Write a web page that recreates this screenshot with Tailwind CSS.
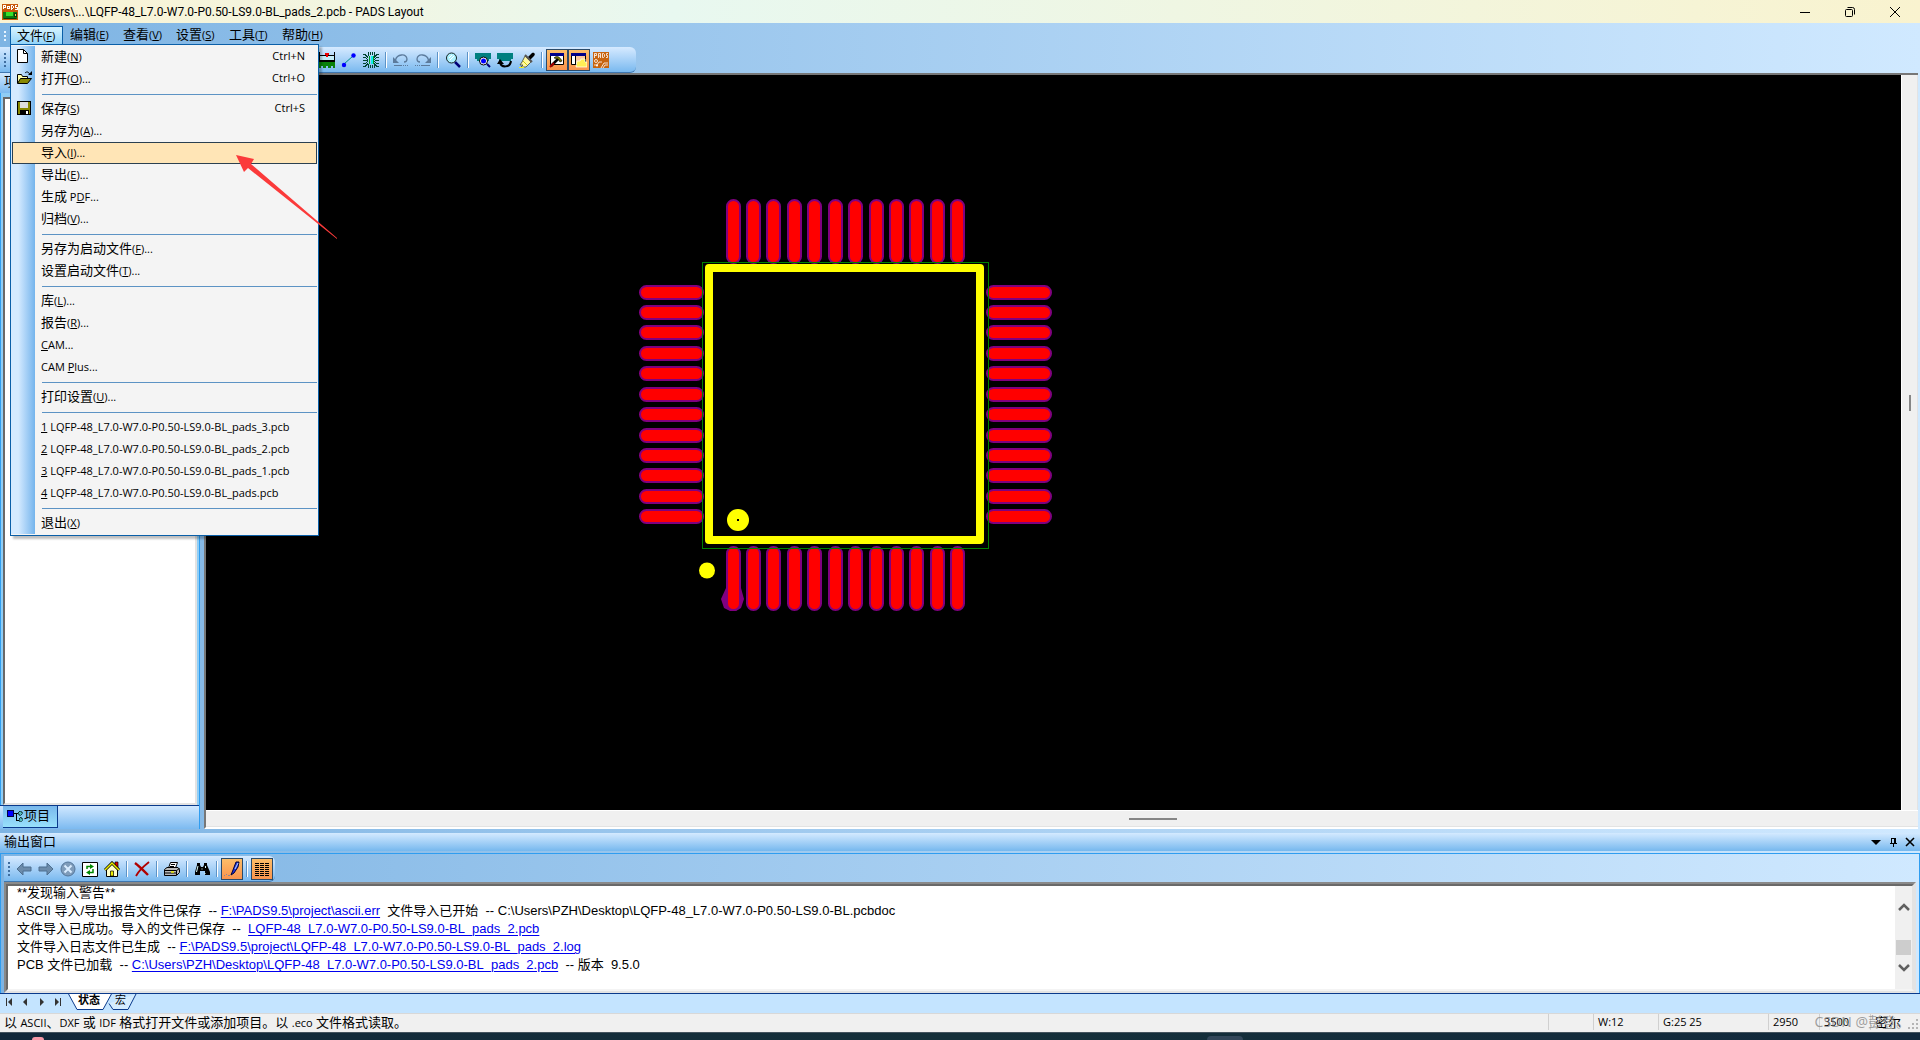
<!DOCTYPE html>
<html lang="zh-CN">

<head>
  <meta charset="UTF-8">
  <meta name="viewport" content="width=device-width, initial-scale=1.0">
  <title>PADS Layout</title>
  <script src="https://cdn.jsdelivr.net/npm/@tailwindcss/browser@4"></script>
</head>

<body class="relative h-screen flex flex-col overflow-hidden bg-gradient-to-r from-[#7eb4e3] to-[#d0e9ff] font-['Open_Sans','Noto_Sans_CJK_SC',sans-serif] text-[11px] leading-4 text-black">

  <!-- Title bar -->
  <header class="h-[23px] shrink-0 flex items-center justify-between pl-0.5 pr-5 bg-gradient-to-r from-[#fcf3d2] via-[#e8f8f0] via-35% to-[#f9f3cf]">
    <div class="flex items-center gap-1.5">
      <svg class="w-4 h-4" viewBox="0 0 16 16" shape-rendering="crispEdges">
        <rect width="16" height="16" fill="#c8590b" />
        <path d="M1 5V1h2v2H1M5 5V2h2v3M5 4h2M9 1v4h1l1-1V2l-1-1zM15 1h-2v2h2v2h-2" fill="none" stroke="#fff" />
        <rect x="1" y="8" width="14" height="7" fill="#0d7a12" />
        <rect x="4" y="8" width="7" height="4" fill="#35e02a" />
        <path d="M2 14h12M12 9h2v3h-2z" stroke="#0a3d08" fill="#ffd44a" />
      </svg>
      <h1 class="font-['Roboto',sans-serif] text-xs">C:\Users\...\LQFP-48_L7.0-W7.0-P0.50-LS9.0-BL_pads_2.pcb - PADS Layout</h1>
    </div>
    <div class="flex items-center gap-[35px]">
      <button aria-label="最小化"><svg class="w-2.5 h-2.5" viewBox="0 0 10 10"><path d="M0 5.500h10" stroke="#000" /></svg></button>
      <button aria-label="还原"><svg class="w-2.5 h-2.5" viewBox="0 0 10 10" fill="none" stroke="#000"><rect x=".5" y="2.500" width="7" height="7" rx="1" /><path d="M2.500 .5h5a2 2 0 0 1 2 2v5" /></svg></button>
      <button aria-label="关闭"><svg class="w-2.5 h-2.5" viewBox="0 0 10 10"><path d="M0 0l10 10M10 0L0 10" stroke="#000" /></svg></button>
    </div>
  </header>

  <!-- Menu bar -->
  <nav class="h-6 shrink-0 flex items-center pt-px whitespace-nowrap">
    <div class="w-2.5 flex flex-col gap-0.5 items-center"><i class="w-0.5 h-0.5 bg-[#e8f4ff]"></i><i class="w-0.5 h-0.5 bg-[#e8f4ff]"></i><i class="w-0.5 h-0.5 bg-[#e8f4ff]"></i></div>
    <button class="w-[53px] h-5 px-1.5 pb-0.5 text-left border border-[#0a5fa8] bg-gradient-to-b from-[#d8f4ff] to-[#8ed2f8]"><span class="text-[13px]">文件</span>(<u>F</u>)</button>
    <button class="w-[53px] h-5 px-[7px] pb-0.5 text-left"><span class="text-[13px]">编辑</span>(<u>E</u>)</button>
    <button class="w-[53px] h-5 px-[7px] pb-0.5 text-left"><span class="text-[13px]">查看</span>(<u>V</u>)</button>
    <button class="w-[53px] h-5 px-[7px] pb-0.5 text-left"><span class="text-[13px]">设置</span>(<u>S</u>)</button>
    <button class="w-[53px] h-5 px-[7px] pb-0.5 text-left"><span class="text-[13px]">工具</span>(<u>T</u>)</button>
    <button class="w-[53px] h-5 px-[7px] pb-0.5 text-left"><span class="text-[13px]">帮助</span>(<u>H</u>)</button>
  </nav>

  <!-- Main toolbar -->
  <div class="h-[26px] shrink-0 flex">
    <div class="flex items-center pr-6 rounded-r-md border-b border-[#3f77b0] bg-gradient-to-b from-[#d6eaff] to-[#79b9ef]">
      <div class="w-2.5 flex flex-col gap-0.5 items-center"><i class="w-0.5 h-0.5 bg-[#3f6ea0]"></i><i class="w-0.5 h-0.5 bg-[#3f6ea0]"></i><i class="w-0.5 h-0.5 bg-[#3f6ea0]"></i><i class="w-0.5 h-0.5 bg-[#3f6ea0]"></i></div>
      <div class="w-[306px]"></div>
      <button class="w-[22px] h-[22px] grid place-items-center" aria-label="板层">
        <svg class="w-4 h-4" viewBox="0 0 16 16" shape-rendering="crispEdges"><path d="M1 3h14v5H1z" fill="#c4ecf8" /><path d="M0 3.500h16M.5 0v8M15.500 0v8" stroke="#000" /><path d="M6 1h4v2H9v2H7V3H6z" fill="#e00" /><path d="M0 8h16v2H0z" fill="#000" /><path d="M0 10h16v6h-2v-2h-2v2H9v-2H7v2H4v-2H2v2H0z" fill="#0a800a" /></svg>
      </button>
      <button class="w-[22px] h-[22px] grid place-items-center" aria-label="布线">
        <svg class="w-4 h-4" viewBox="0 0 16 16"><path d="M3 12L12 4" stroke="#088" /><circle cx="3" cy="13" r="2.200" fill="#00f" /><circle cx="12.500" cy="3.500" r="2.200" fill="#00f" /></svg>
      </button>
      <button class="w-[22px] h-[22px] grid place-items-center" aria-label="元件">
        <svg class="w-4 h-4" viewBox="0 0 16 16" fill="none" shape-rendering="crispEdges"><path d="M5.500 0v4M7.500 0v3M9.500 0v3M11.500 0v4M5.500 12v4M7.500 13v3M9.500 13v3M11.500 12v4M0 2.500h2l3 3M0 5.500h2l3 2M0 8.500h5M0 11.500h2l3-2M0 14.500h2l3-3M16 2.500h-2l-3 3M16 5.500h-2l-3 2M16 8.500h-4M16 11.500h-2l-3-2M16 14.500h-2l-3-3" stroke="#043" /><path d="M6.500 4v8M10.500 4v8" stroke="#092" /><path d="M8.500 4v8" stroke="#1ee" stroke-width="2" /></svg>
      </button>
      <span class="w-2 h-4 flex justify-center"><i class="w-0.5 h-4 bg-[#5c93c7] border-r border-white"></i></span>
      <button class="w-[22px] h-[22px] grid place-items-center" aria-label="撤消">
        <svg class="w-4 h-4" viewBox="0 0 16 16" fill="none" stroke="#5c7b9c"><path d="M2.500 8C4 2 13 1 14 7c0 2-1 3-3 3" stroke-width="1.300" /><path d="M0 5v6h6z" fill="#5c7b9c" stroke="none" /><path d="M1 13.500h8" /><path d="M10 13.500h6" stroke-dasharray="1 1" /></svg>
      </button>
      <button class="w-[22px] h-[22px] grid place-items-center" aria-label="重做">
        <svg class="w-4 h-4" viewBox="0 0 16 16" fill="none" stroke="#5c7b9c"><path d="M13.500 8C12 2 3 1 2 7c0 2 1 3 3 3" stroke-width="1.300" /><path d="M16 5v6h-6z" fill="#5c7b9c" stroke="none" /><path d="M6 13.500h9" /><path d="M0 13.500h6" stroke-dasharray="1 1" /></svg>
      </button>
      <span class="w-2 h-4 flex justify-center"><i class="w-0.5 h-4 bg-[#5c93c7] border-r border-white"></i></span>
      <button class="w-[22px] h-[22px] grid place-items-center" aria-label="缩放">
        <svg class="w-4 h-4" viewBox="0 0 16 16"><path d="M10 10l5 5" stroke="#007" stroke-width="2.500" /><circle cx="6.500" cy="6" r="5" fill="#aef2ff" stroke="#122" /><path d="M4 6l3-3M5 8l4-4" stroke="#fff" /></svg>
      </button>
      <span class="w-2 h-4 flex justify-center"><i class="w-0.5 h-4 bg-[#5c93c7] border-r border-white"></i></span>
      <button class="w-[22px] h-[22px] grid place-items-center" aria-label="查看板">
        <svg class="w-4 h-4" viewBox="0 0 16 16"><path d="M0 1h16v6h-2v2H2V7H0z" fill="#008080" /><path d="M12 12l3 3" stroke="#007" stroke-width="2" /><circle cx="8.500" cy="9" r="4" fill="#fff" stroke="#000" /><circle cx="8.500" cy="9" r="2.500" fill="#00f" /></svg>
      </button>
      <button class="w-[22px] h-[22px] grid place-items-center" aria-label="刷新板">
        <svg class="w-4 h-4" viewBox="0 0 16 16"><path d="M0 1h16v6h-2v2H2V7H0z" fill="#008080" /><path d="M3 10c1 6 10 6 11-1" fill="none" stroke="#000" stroke-width="2" /><path d="M0 12l3-5 4 5z" /></svg>
      </button>
      <button class="w-[22px] h-[22px] grid place-items-center" aria-label="重画">
        <svg class="w-4 h-4" viewBox="0 0 16 16"><path d="M9 5l4-4c2-1 4 1 2 3l-4 4z" /><path d="M6 4l6 6-5 5H2l2-2H1l2-3z" fill="#fff8a0" stroke="#443" stroke-width=".8" /><path d="M6 3l7 7" stroke="#555" stroke-width="2" /><path d="M4 9l4 4" stroke="#cc0" /><path d="M0 15.500h5" stroke="#ee2" /></svg>
      </button>
      <span class="w-2 h-4 flex justify-center"><i class="w-0.5 h-4 bg-[#5c93c7] border-r border-white"></i></span>
      <button class="w-[22px] h-[22px] grid place-items-center border border-[#2b4a68] bg-gradient-to-b from-[#fcbd68] to-[#f9934c]" aria-label="输出窗口">
        <svg class="w-4 h-4" viewBox="0 0 16 16"><path d="M1.500 1.500h13v11h-13z" fill="#fff" stroke="#000" /><path d="M1 1h14v3H1z" fill="#008" /><path d="M2 14l8-8" stroke="#000" stroke-width="2.500" /><path d="M1 15l4-4" stroke="#a00" stroke-width="2" /><path d="M5 6c3-3 6-1 8 3l-2 1-2-3z" fill="#770" stroke="#000" stroke-width=".6" /></svg>
      </button>
      <button class="w-[22px] h-[22px] grid place-items-center border border-[#2b4a68] bg-gradient-to-b from-[#fcbd68] to-[#f9934c]" aria-label="项目浏览器">
        <svg class="w-4 h-4" viewBox="0 0 16 16"><path d="M.5 1.500h14v11H.5z" fill="#fbc89c" stroke="#000" /><path d="M0 1h15v3H0z" fill="#008" /><path d="M1 4h3v8H1z" fill="#fff" /><path d="M4.500 4v8" stroke="#000" /><path d="M5 15l1-6h3l1-2h4v3h2v5z" fill="#fe5" stroke="#fff" stroke-width=".7" /></svg>
      </button>
      <button class="w-[22px] h-[22px] grid place-items-center" aria-label="PADS">
        <svg class="w-4 h-4" viewBox="0 0 16 16"><path d="M0 0h16v16H0z" fill="#c8640f" /><path d="M1.500 6V1.500h2v2h-2M5.500 6V1.500h2V6M5.500 4h2M9.500 1.500v4h1l1-1v-2l-1-1zM15 1.500h-1.500v2h1v2H13M8 16l3-5h4M10 16l2-3h3M1 13h3l2-3h3" fill="none" stroke="#fff" stroke-width=".8" /><circle cx="3" cy="9" r="1.500" fill="none" stroke="#fff" stroke-width=".8" /><circle cx="4" cy="13.500" r="1" fill="#fff" /></svg>
      </button>
    </div>
  </div>

  <!-- Project panel and drawing area -->
  <main class="flex-1 min-h-0 flex">
    <aside class="w-[200px] shrink-0 flex flex-col border-r border-[#2f9df0]">
      <div class="h-5 shrink-0 px-1 text-[13px] leading-4 bg-gradient-to-b from-[#d0e8ff] to-[#7cbaf0]">项目浏览器</div>
      <div class="flex-1 flex pl-0.5 pr-0.5 pt-1 bg-[#8fcdf5] border-l border-[#2f9df0]">
        <div class="flex-1 bg-white border-2 border-t-[#696969] border-l-[#696969] border-r-[#e3e3e3] border-b-[#e3e3e3]"></div>
      </div>
      <div class="h-6 shrink-0 flex pl-[3px] border-t border-[#0a3a8c] bg-gradient-to-b from-[#d0e8ff] to-[#7cbaf0]">
        <button class="h-[22px] pl-1 pr-[7px] pb-[3px] flex items-center gap-px text-[13px] border-r border-b border-[#0a3a8c] bg-gradient-to-b from-[#79b8ec] to-[#98e0fb]">
          <svg class="w-4 h-4" viewBox="0 0 16 16" shape-rendering="crispEdges"><path d="M.5 3.500h6v6h-6z" fill="#00f" stroke="#004" /><path d="M7 6.500h4M9.500 6.500v7h3" stroke="#000" fill="none" /><path d="M11 5h1V4h2v1h1v2h-1v1h-2V7h-1zM12 11h1v-1h1v1h1v3h-3z" fill="#5bb" stroke="#022" stroke-width=".6" /></svg>项目
        </button>
      </div>
    </aside>
    <section class="flex-1 min-w-0 ml-1 mr-0.5 flex flex-col bg-[#f0f0f0] border-t-2 border-l-2 border-b-2 border-t-[#777] border-l-[#777] border-b-white">
      <div class="flex-1 min-h-0 flex">
        <div class="relative flex-1 overflow-hidden bg-black">
          <svg id="board" class="absolute left-[414px] top-[105px] w-[450px] h-[450px]" viewBox="0 0 450 450">
            <path d="M106 408h15l3 11-3 9-5 3h-6l-6-3-3-9z" fill="#800080" />
            <g id="pads" fill="#f00" stroke="#800080" stroke-width="2"></g>
            <rect x="82.500" y="82.500" width="286" height="286" fill="none" stroke="#008000" />
            <rect x="89" y="88" width="271" height="272" fill="none" stroke="#ff0" stroke-width="8" stroke-linejoin="round" />
            <circle cx="118" cy="340" r="11" fill="#ff0" />
            <rect x="117" y="339" width="2" height="2" />
            <circle cx="87" cy="390.500" r="8" fill="#ff0" />
          </svg>
        </div>
        <div class="w-[17px] flex items-center justify-center pb-20 border-l border-r border-l-white border-r-[#e3e3e3]"><i class="w-0.5 h-4 bg-[#868686]"></i></div>
      </div>
      <div class="h-[17px] flex items-center justify-center pl-[182px] border-t border-b border-t-white border-b-[#e3e3e3]"><i class="w-12 h-0.5 bg-[#868686]"></i></div>
    </section>
  </main>

  <!-- Output window -->
  <section class="shrink-0 flex flex-col pt-1">
    <div class="h-[18px] mb-0.5 px-1 flex items-center justify-between bg-gradient-to-b from-[#d4eaff] to-[#76b8ee]">
      <h2 class="pb-0.5 text-[13px]">输出窗口</h2>
      <div class="flex items-center gap-[7px] pr-px">
        <button aria-label="选项"><svg class="w-2.5 h-2.5" viewBox="0 0 10 10"><path d="M0 3h10L5 8z" /></svg></button>
        <button aria-label="自动隐藏"><svg class="w-2.5 h-2.5" viewBox="0 0 10 10" shape-rendering="crispEdges"><path d="M3.500 6V1.500h4V6M6.500 1v5M2 6.500h7M5.500 7v3" fill="none" stroke="#000" /></svg></button>
        <button aria-label="关闭输出窗口"><svg class="w-2.5 h-2.5" viewBox="0 0 10 10"><path d="M1 1l8 8M9 1L1 9" stroke="#000" stroke-width="1.600" /></svg></button>
      </div>
    </div>
    <div class="border-t border-x border-[#2f9df0] px-[3px] pt-0.5">
      <div class="flex">
        <div class="h-[26px] flex items-center pr-0.5 rounded-r-md border-b border-[#3f77b0] bg-gradient-to-b from-[#d6eaff] to-[#79b9ef]">
          <div class="w-[9px] flex flex-col gap-0.5 items-center"><i class="w-0.5 h-0.5 bg-[#3f6ea0]"></i><i class="w-0.5 h-0.5 bg-[#3f6ea0]"></i><i class="w-0.5 h-0.5 bg-[#3f6ea0]"></i><i class="w-0.5 h-0.5 bg-[#3f6ea0]"></i></div>
          <button class="w-[22px] h-[22px] grid place-items-center" aria-label="后退"><svg class="w-4 h-4" viewBox="0 0 16 16"><path d="M1 8l6-6v4h8v4H7v4z" fill="#6c8cab" stroke="#4d6f90" /></svg></button>
          <button class="w-[22px] h-[22px] grid place-items-center" aria-label="前进"><svg class="w-4 h-4" viewBox="0 0 16 16"><path d="M15 8L9 2v4H1v4h8v4z" fill="#6c8cab" stroke="#4d6f90" /></svg></button>
          <button class="w-[22px] h-[22px] grid place-items-center" aria-label="停止"><svg class="w-4 h-4" viewBox="0 0 16 16"><circle cx="8" cy="8" r="7" fill="#7f9cba" stroke="#54769a" /><path d="M4.500 4.500l7 7M11.500 4.500l-7 7" stroke="#d8ecff" stroke-width="2" /></svg></button>
          <button class="w-[22px] h-[22px] grid place-items-center" aria-label="刷新"><svg class="w-4 h-4" viewBox="0 0 16 16"><path d="M.5 1.500h15v14H.5z" fill="#fff" stroke="#000" /><path d="M5 8V5.500h4M11 8v3.500H7" fill="none" stroke="#080" stroke-width="1.500" /><path d="M8 3l4 2.500L8 8zM8 9l-4 2.500L8 14z" fill="#080" /></svg></button>
          <button class="w-[22px] h-[22px] grid place-items-center" aria-label="主页"><svg class="w-4 h-4" viewBox="0 0 16 16"><path d="M11 1h3v6h-3z" fill="#d00" stroke="#000" stroke-width=".7" /><path d="M2.500 8v7.500h11V8L8 3z" fill="#ffc" stroke="#000" /><path d="M1 9l7-7 7 7" fill="none" stroke="#000" stroke-width="3" /><path d="M1 9l7-7 7 7" fill="none" stroke="#ee0" stroke-width="1.500" /><path d="M6.500 10h3v5h-3z" fill="#ee0" stroke="#000" stroke-width=".7" /></svg></button>
          <span class="w-2 h-4 flex justify-center"><i class="w-0.5 h-4 bg-[#5c93c7] border-r border-white"></i></span>
          <button class="w-[22px] h-[22px] grid place-items-center" aria-label="清除"><svg class="w-4 h-4" viewBox="0 0 16 16" fill="none" stroke="#b00000"><path d="M1 2c4 3 9 8 13 12" stroke-width="2.400" /><path d="M15 1C10 5 5 9 2 15" stroke-width="1.800" /></svg></button>
          <span class="w-2 h-4 flex justify-center"><i class="w-0.5 h-4 bg-[#5c93c7] border-r border-white"></i></span>
          <button class="w-[22px] h-[22px] grid place-items-center" aria-label="打印"><svg class="w-4 h-4" viewBox="0 0 16 16" stroke="#000"><path d="M4.500 7l2-5.500h7L11.500 7z" fill="#fff" /><path d="M.5 8.500L3 6.500h11l1.500 2v3l-3 3H.5z" fill="#bbb" /><path d="M1 9.500h11.500v4.500M12.500 9.500l3-2M1 12h11M7 3.500h4M6 5.500h4" fill="none" /><path d="M7 11h3" stroke="#ee0" stroke-width="1.500" /></svg></button>
          <span class="w-2 h-4 flex justify-center"><i class="w-0.5 h-4 bg-[#5c93c7] border-r border-white"></i></span>
          <button class="w-[22px] h-[22px] grid place-items-center" aria-label="查找"><svg class="w-4 h-4" viewBox="0 0 16 16"><path d="M3 2h3v2l1 2h2l1-2V2h3v2l3 7v3h-5v-4H6v4H1v-3l2-7z" /><path d="M4 5l-1.500 6M11.500 5v2M11 12v1M7.500 8h1" stroke="#dff" /></svg></button>
          <span class="w-2 h-4 flex justify-center"><i class="w-0.5 h-4 bg-[#5c93c7] border-r border-white"></i></span>
          <button class="w-[22px] h-[22px] grid place-items-center border border-[#2b4a68] bg-gradient-to-b from-[#fcbd68] to-[#f9934c]" aria-label="记录"><svg class="w-4 h-4" viewBox="0 0 16 16"><path d="M7 14l2-5 3-8h3l-1 5-4 6z" fill="#23d" stroke="#003" /><path d="M11 8l3-6" stroke="#bdf" /><path d="M0 14.500h1m1-1h1m1 1h2" stroke="#889" /></svg></button>
          <span class="w-2 h-4 flex justify-center"><i class="w-0.5 h-4 bg-[#5c93c7] border-r border-white"></i></span>
          <button class="w-[22px] h-[22px] grid place-items-center border border-[#2b4a68] bg-gradient-to-b from-[#fcbd68] to-[#f9934c]" aria-label="表格"><svg class="w-4 h-4" viewBox="0 0 16 16" shape-rendering="crispEdges"><path d="M1 2.500h14M1 4.500h14M1 6.500h14M1 8.500h14M1 10.500h14M1 12.500h14M1 14.500h14" stroke="#000" stroke-dasharray="4 1" /></svg></button>
        </div>
      </div>
      <div class="h-[111px] border-2 border-t-[#8a8a8a] border-l-[#8a8a8a] border-r-[#e3e3e3] border-b-[#e3e3e3]">
        <div class="h-full flex border-2 border-t-[#696969] border-l-[#696969] border-r-[#e3e3e3] border-b-[#f4f4f4] bg-white">
          <div class="flex-1 pl-[9px] -mt-0.5 font-['Liberation_Sans','Noto_Sans_CJK_SC',sans-serif] text-[13px] leading-[18px]">
            <p class="whitespace-pre">**发现输入警告**</p>
            <p class="whitespace-pre">ASCII 导入/导出报告文件已保存  -- <a href="#" class="text-[#0000ee] underline underline-offset-2">F:\PADS9.5\project\ascii.err</a>  文件导入已开始  -- C:\Users\PZH\Desktop\LQFP-48_L7.0-W7.0-P0.50-LS9.0-BL.pcbdoc</p>
            <p class="whitespace-pre">文件导入已成功。导入的文件已保存  --  <a href="#" class="text-[#0000ee] underline underline-offset-2">LQFP-48_L7.0-W7.0-P0.50-LS9.0-BL_pads_2.pcb</a></p>
            <p class="whitespace-pre">文件导入日志文件已生成  -- <a href="#" class="text-[#0000ee] underline underline-offset-2">F:\PADS9.5\project\LQFP-48_L7.0-W7.0-P0.50-LS9.0-BL_pads_2.log</a></p>
            <p class="whitespace-pre">PCB 文件已加载  -- <a href="#" class="text-[#0000ee] underline underline-offset-2">C:\Users\PZH\Desktop\LQFP-48_L7.0-W7.0-P0.50-LS9.0-BL_pads_2.pcb</a>  -- 版本  9.5.0</p>
          </div>
          <div class="w-[17px] flex flex-col items-center justify-between py-4 bg-[#f0f0f0]">
            <svg class="w-3 h-2.5" viewBox="0 0 12 10"><path d="M1 8l5-5 5 5" fill="none" stroke="#606060" stroke-width="2.500" /></svg>
            <i class="w-[15px] h-[15px] mt-5 bg-[#cdcdcd]"></i>
            <svg class="w-3 h-2.5" viewBox="0 0 12 10"><path d="M1 2l5 5 5-5" fill="none" stroke="#606060" stroke-width="2.500" /></svg>
          </div>
        </div>
      </div>
    </div>

    <!-- Output tabs -->
    <div class="h-5 flex items-start border-t border-[#0a3a8c] bg-[#c4e4ff]">
      <div class="flex gap-1.5 pl-1 pt-1">
        <button aria-label="第一个"><svg class="w-2.5 h-2" viewBox="0 0 10 8"><path d="M2 0h1v8H2zM8 0v8L4 4z" fill="#333" /></svg></button>
        <button aria-label="上一个"><svg class="w-2.5 h-2" viewBox="0 0 10 8"><path d="M7 0v8L3 4z" fill="#333" /></svg></button>
        <button aria-label="下一个"><svg class="w-2.5 h-2" viewBox="0 0 10 8"><path d="M4 0v8l4-4z" fill="#333" /></svg></button>
        <button aria-label="最后一个"><svg class="w-2.5 h-2" viewBox="0 0 10 8"><path d="M8 0h1v8H8zM3 0v8l4-4z" fill="#333" /></svg></button>
      </div>
      <div class="relative w-[72px] h-4 ml-1.5">
        <svg class="absolute inset-0 w-[72px] h-4" viewBox="0 0 72 16"><path d="M41 9.500l4 6h15l8-15.500" fill="#d4ecff" stroke="#0a3a8c" /><path d="M0-1l9 16.500h26L44-1" fill="#fff" stroke="#0a3a8c" /></svg>
        <div class="relative flex pl-2.5 gap-[15px]">
          <button class="font-bold leading-3">状态</button>
          <button class="leading-3">宏</button>
        </div>
      </div>
    </div>
  </section>

  <!-- Status bar -->
  <footer class="relative h-[19px] shrink-0 flex items-center pl-1 pb-0.5 border-t border-[#d8d8d8] bg-[#f0f0f0]">
    <p class="flex-1 text-[13px]">以 <span class="text-[11px]">ASCII</span>、<span class="text-[11px]">DXF</span> 或 <span class="text-[11px]">IDF</span> 格式打开文件或添加项目。以 <span class="text-[11px]">.eco</span> 文件格式读取。</p>
    <span class="w-[45px] h-4 border-l border-[#d0d0d0]"></span>
    <span class="w-[65px] h-4 pl-1 border-l border-[#d0d0d0]">W:12</span>
    <span class="w-[110px] h-4 pl-1 border-l border-[#d0d0d0]">G:25 25</span>
    <span class="w-[51px] h-4 pl-1 border-l border-[#d0d0d0]">2950</span>
    <span class="w-[51px] h-4 pl-1 border-l border-[#d0d0d0]">3500</span>
    <span class="w-[32px] h-4 pl-1 text-[13px] border-l border-[#d0d0d0]">密尔</span>
    <svg class="w-[18px] h-4" viewBox="0 0 18 16" shape-rendering="crispEdges" fill="#b4b4b4"><path d="M14 5h2v2h-2zM14 9h2v2h-2zM14 13h2v2h-2zM10 9h2v2h-2zM10 13h2v2h-2zM6 13h2v2H6z" /></svg>
    <span class="absolute right-2.5 top-0 whitespace-nowrap text-sm leading-4 text-[#888]/80">CSDN @彭登。</span>
  </footer>

  <!-- Taskbar edge -->
  <div class="h-2 shrink-0 flex items-end overflow-hidden border-t border-[#44535e] bg-gradient-to-r from-[#12283a] via-[#15303a] to-[#12283c]">
    <i class="w-3 h-[3px] ml-8 rounded-t-full bg-[#f79aa8]"></i>
    <i class="w-9 h-1 ml-[1163px] rounded-t-md bg-[#33475a]"></i>
  </div>

  <!-- File menu -->
  <div class="absolute left-2.5 top-11 w-[309px] p-px border border-[#0a5fa8] bg-[#f4f4f4] shadow-[3px_3px_2px_rgba(0,0,0,0.25)]">
    <div class="absolute left-0 inset-y-px w-6 bg-gradient-to-r from-[#d4eaff] from-30% to-[#74b4ec]"></div>
    <div class="relative flex flex-col">
      <button class="h-[22px] pl-[5px] pr-3 pb-0.5 flex items-center">
        <svg class="w-4 h-4" viewBox="0 0 16 16"><path d="M.5 1.500h6l4 4v9H.5z" fill="#fff" stroke="#000" /><path d="M6.500 1.500v4h4" fill="none" stroke="#000" /></svg>
        <span class="flex-1 pl-2 text-left"><span class="text-[13px]">新建</span>(<u>N</u>)</span>Ctrl+N
      </button>
      <button class="h-[22px] pl-[5px] pr-3 pb-0.5 flex items-center">
        <svg class="w-4 h-4" viewBox="0 0 16 16"><path d="M.5 13V4.500h4l1 2h5V9" fill="#ffa" stroke="#000" /><path d="M.5 13.500l3-5h11l-4 5z" fill="#880" stroke="#000" /><path d="M8 3c2-2 4-1 5 2" fill="none" stroke="#000" /><path d="M11 5h4V1z" /></svg>
        <span class="flex-1 pl-2 text-left"><span class="text-[13px]">打开</span>(<u>O</u>)...</span>Ctrl+O
      </button>
      <hr class="ml-[30px] mt-1 mb-[3px] border-[#5c93c4]">
      <button class="h-[22px] pl-[5px] pr-3 pb-0.5 flex items-center">
        <svg class="w-4 h-4" viewBox="0 0 16 16" shape-rendering="crispEdges"><path d="M.5 1.500h13v13h-13z" fill="#880" stroke="#000" /><path d="M3 2h8v6H3z" fill="#ddd" /><path d="M3 10h9v5H3z" /><path d="M9 11h2v3H9z" fill="#fff" /></svg>
        <span class="flex-1 pl-2 text-left"><span class="text-[13px]">保存</span>(<u>S</u>)</span>Ctrl+S
      </button>
      <button class="h-[22px] pl-[29px] pb-0.5 text-left"><span class="text-[13px]">另存为</span>(<u>A</u>)...</button>
      <button class="h-[22px] pl-7 pb-0.5 text-left border border-[#2b4050] bg-[#ffe5b6]"><span class="text-[13px]">导入</span>(<u>I</u>)...</button>
      <button class="h-[22px] pl-[29px] pb-0.5 text-left"><span class="text-[13px]">导出</span>(<u>E</u>)...</button>
      <button class="h-[22px] pl-[29px] pb-0.5 text-left"><span class="text-[13px]">生成</span> P<u>D</u>F...</button>
      <button class="h-[22px] pl-[29px] pb-0.5 text-left"><span class="text-[13px]">归档</span>(<u>V</u>)...</button>
      <hr class="ml-[30px] mt-1 mb-[3px] border-[#5c93c4]">
      <button class="h-[22px] pl-[29px] pb-0.5 text-left"><span class="text-[13px]">另存为启动文件</span>(<u>F</u>)...</button>
      <button class="h-[22px] pl-[29px] pb-0.5 text-left"><span class="text-[13px]">设置启动文件</span>(<u>T</u>)...</button>
      <hr class="ml-[30px] mt-1 mb-[3px] border-[#5c93c4]">
      <button class="h-[22px] pl-[29px] pb-0.5 text-left"><span class="text-[13px]">库</span>(<u>L</u>)...</button>
      <button class="h-[22px] pl-[29px] pb-0.5 text-left"><span class="text-[13px]">报告</span>(<u>R</u>)...</button>
      <button class="h-[22px] pl-[29px] text-left"><u>C</u>AM...</button>
      <button class="h-[22px] pl-[29px] text-left">CAM <u>P</u>lus...</button>
      <hr class="ml-[30px] mt-1 mb-[3px] border-[#5c93c4]">
      <button class="h-[22px] pl-[29px] pb-0.5 text-left"><span class="text-[13px]">打印设置</span>(<u>U</u>)...</button>
      <hr class="ml-[30px] mt-1 mb-[3px] border-[#5c93c4]">
      <button class="h-[22px] pl-[29px] text-left"><u>1</u> LQFP-48_L7.0-W7.0-P0.50-LS9.0-BL_pads_3.pcb</button>
      <button class="h-[22px] pl-[29px] text-left"><u>2</u> LQFP-48_L7.0-W7.0-P0.50-LS9.0-BL_pads_2.pcb</button>
      <button class="h-[22px] pl-[29px] text-left"><u>3</u> LQFP-48_L7.0-W7.0-P0.50-LS9.0-BL_pads_1.pcb</button>
      <button class="h-[22px] pl-[29px] text-left"><u>4</u> LQFP-48_L7.0-W7.0-P0.50-LS9.0-BL_pads.pcb</button>
      <hr class="ml-[30px] mt-1 mb-[3px] border-[#5c93c4]">
      <button class="h-[22px] pl-[29px] pb-0.5 text-left"><span class="text-[13px]">退出</span>(<u>X</u>)</button>
    </div>
  </div>

  <!-- Pointer arrow -->
  <svg class="absolute left-[236px] top-[155px] w-[102px] h-[85px] pointer-events-none" viewBox="0 0 102 85">
    <path d="M0 0l18 4-3 5 86 74v1L12 13l-4 4z" fill="#fb3a3a" />
  </svg>

  <script>
    // 12 pads on each side of the package
    const pads = document.getElementById('pads');
    const steps = [106, 126, 146, 167, 187, 208, 228, 249, 269, 289, 310, 330];

    function addPad(x, y, w, h) {
      const pad = document.createElementNS('http://www.w3.org/2000/svg', 'rect');
      pad.setAttribute('x', x + 1);
      pad.setAttribute('y', y + 1);
      pad.setAttribute('width', w - 2);
      pad.setAttribute('height', h - 2);
      pad.setAttribute('rx', 6.5);
      pads.appendChild(pad);
    }

    steps.forEach((pos) => {
      addPad(pos, 19, 15, 65);
      addPad(pos, 366, 15, 65);
      addPad(19, pos - 1, 65, 15);
      addPad(366, pos - 1, 66, 15);
    });
  </script>
</body>

</html>
